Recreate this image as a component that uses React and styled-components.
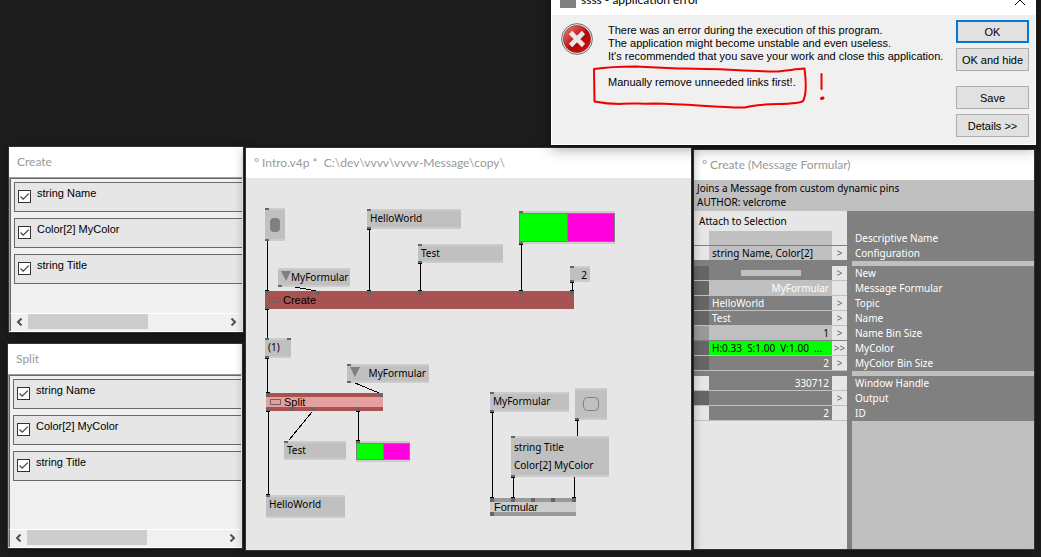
import React from "react";
import styled, { createGlobalStyle, css } from "styled-components";

const uiFont = '"Liberation Sans", Arial, sans-serif';
const titleFont = 'Lato, "Segoe UI", sans-serif';
const patchFont = '"Noto Sans", "Lucida Sans Unicode", sans-serif';

const GlobalStyle = createGlobalStyle`
  *, *::before, *::after { box-sizing: border-box; }
  body { margin: 0; background: #1d1d1d; overflow: hidden; }
  button { font: inherit; color: inherit; margin: 0; padding: 0; border: 0; background: none; }
  svg { flex: none; }
`;

/* ---------- desktop and windows ---------- */

const Desktop = styled.main`
  position: relative;
  min-height: 100vh;
  padding: 146px 6px 6px 7px;
  display: grid;
  grid-template-columns: 237px minmax(0, 447fr) minmax(0, 342fr);
  column-gap: 1px;
  background: #1d1d1d;
  font: 11px/14px ${uiFont};
  color: #000;
`;

const Side = styled.div`
  display: flex;
  flex-direction: column;
  gap: 10px;
  padding-bottom: 2px;
`;

const Window = styled.section`
  display: flex;
  flex-direction: column;
  min-width: 0;
  border: 1px solid #333;
  background: #fff;
  box-shadow: 0 2px 10px rgba(0, 0, 0, 0.4);
`;

const FormularWindow = styled(Window)`
  width: 236px;
  align-self: ${(p) => (p.$end ? "flex-end" : "flex-start")};
  flex: ${(p) => (p.$grow ? "1" : "0 0 187px")};
`;

const PatchWindow = styled(Window)`
  position: relative;
  z-index: 1;
  margin-top: 1px;
`;

const InspectorWindow = styled(Window)`
  margin: 3px 0 1px;
`;

const TitleBar = styled.h2`
  flex: none;
  height: 30px;
  margin: 0;
  padding: 0 8px;
  overflow: hidden;
  background: #fff;
  color: #999;
  font: 12px/30px ${titleFont};
  white-space: pre;
`;

/* ---------- formular lists ---------- */

const Sunken = styled.div`
  flex: 1;
  display: flex;
  flex-direction: column;
  border: 1px solid #a0a0a0;
  border-right-color: #fff;
  border-bottom-color: #fff;
  background: #f0f0f0;
`;

const List = styled.ul`
  flex: 1;
  display: flex;
  flex-direction: column;
  gap: 6px;
  margin: 0;
  padding: 3px 0 0 3px;
  list-style: none;
  border-top: 1px solid #696969;
  border-left: 1px solid #696969;
`;

const Item = styled.li`
  height: 30px;
  border: 1px solid #696969;
  border-right: 0;
  background: #e6e6e6;
`;

const ItemLabel = styled.label`
  display: flex;
  gap: 6px;
  padding: 3px 0 0 3px;
`;

const TickBox = styled.span`
  display: grid;
  margin-top: 4px;

  > * { grid-area: 1 / 1; }
  svg { pointer-events: none; }
`;

const Tick = styled.input`
  appearance: none;
  width: 13px;
  height: 13px;
  margin: 0;
  border: 1px solid #333;
  background: #fff;

  &:not(:checked) + svg { visibility: hidden; }
`;

const ScrollBar = styled.div`
  display: flex;
  height: 18px;
  padding-bottom: 2px;
  border-top: 1px solid #fff;
  border-left: 1px solid #696969;
  background: #f0f0f0;
`;

const ScrollButton = styled.button`
  display: grid;
  place-items: center;
  width: 17px;
`;

const Track = styled.div`
  flex: 1;
  display: flex;
`;

const Thumb = styled.div`
  width: 120px;
  background: #cdcdcd;
`;

const Chevron = ({ d }) => (
  <svg width="7" height="8" viewBox="0 0 7 8" fill="none" stroke="#505050" strokeWidth="2">
    <path d={d} />
  </svg>
);

const fields = ["string Name", "Color[2] MyColor", "string Title"];

function Formular({ title, ...rest }) {
  return (
    <FormularWindow {...rest}>
      <TitleBar>{title}</TitleBar>
      <Sunken>
        <List>
          {fields.map((name) => (
            <Item key={name}>
              <ItemLabel>
                <TickBox>
                  <Tick type="checkbox" defaultChecked />
                  <svg width="13" height="13" fill="none" stroke="#444" strokeWidth="1.3">
                    <path d="M2.5 6.5L5.2 9.2L10.8 3.6" />
                  </svg>
                </TickBox>
                <span>{name}</span>
              </ItemLabel>
            </Item>
          ))}
        </List>
        <ScrollBar>
          <ScrollButton aria-label="Scroll left"><Chevron d="M5.5 0.5L2 4L5.5 7.5" /></ScrollButton>
          <Track><Thumb /></Track>
          <ScrollButton aria-label="Scroll right"><Chevron d="M1.5 0.5L5 4L1.5 7.5" /></ScrollButton>
        </ScrollBar>
      </Sunken>
    </FormularWindow>
  );
}

/* ---------- patch canvas ---------- */

const Canvas = styled.div`
  position: relative;
  flex: 1;
  overflow: hidden;
  background: #e6e6e6;
  font: 10px/14px ${patchFont};
`;

const Wires = styled.svg`
  position: absolute;
  inset: 0;
  width: 100%;
  height: 100%;
  fill: none;
  stroke: #000;
  shape-rendering: crispEdges;
`;

const placed = css`
  position: absolute;
  left: ${(p) => p.$x}px;
  top: ${(p) => p.$y}px;
  width: ${(p) => p.$w}px;
  height: ${(p) => p.$h}px;
`;

const IOBox = styled.div`
  ${placed}
  display: flex;
  align-items: ${(p) => (p.$center ? "center" : "flex-start")};
  justify-content: ${(p) => (p.$center ? "center" : p.$end ? "flex-end" : "space-between")};
  padding: 0 3px;
  border: solid #ccc;
  border-width: 2px 0;
  background: #c0c0c0;
  white-space: pre-line;
  line-height: ${(p) => (p.$lines ? 18 : 14)}px;
`;

const tones = {
  selected: ["#a85252", "#a85252"],
  tinted: ["#a85252", "#e4a0a0"],
  plain: ["#999", "#ccc"],
};

const Module = styled.div`
  ${placed}
  display: flex;
  align-items: center;
  gap: 3px;
  padding: 0 4px;
  border: solid ${(p) => tones[p.$tone][0]};
  border-width: 4px 0;
  background: ${(p) => tones[p.$tone][1]};
  font: 11px/10px ${uiFont};
`;

const ColorBox = styled.div`
  ${placed}
  display: flex;
  border: solid #ccc;
  border-width: 2px 0;
`;

const Swatch = styled.span`
  flex: 1;
  border: 1px solid #808080;
  border-left-width: ${(p) => (p.$first ? 1 : 0)}px;
  background: ${(p) => p.$color};
`;

const Pin = styled.i`
  position: absolute;
  left: ${(p) => p.$x}px;
  ${(p) => (p.$out ? "bottom" : "top")}: ${(p) => (p.$tall ? -4 : -2)}px;
  width: 4px;
  height: ${(p) => (p.$tall ? 4 : 2)}px;
  background: #666;
`;

const Pins = ({ ins = [], outs = [], tall }) => (
  <>
    {ins.map((x) => <Pin key={`i${x}`} $x={x} $tall={tall} />)}
    {outs.map((x) => <Pin key={`o${x}`} $x={x} $tall={tall} $out />)}
  </>
);

const Triangle = () => (
  <svg width="10" height="11" fill="#808080"><path d="M0 1H10L5 11Z" /></svg>
);

const ModuleIcon = () => (
  <svg width="11" height="6" fill="none" stroke="#666"><path d="M.5 .5H10.5V5.5H.5Z" /></svg>
);

const wires = [
  "M21.5 62V114", "M44 108L70 113", "M123.5 51V114", "M174.5 85V114", "M275.5 66V114",
  "M326.5 104V114", "M21.5 131V161", "M21.5 180V216", "M109 205L133 215", "M22.5 233V318",
  "M66 234L43 262", "M112.5 233V264", "M246.5 234V321", "M331.5 242V260", "M328.5 298V321",
  "M267.5 299V321",
];
const wireEnds = [
  [19, 62], [121, 51], [172, 85], [273, 66], [324, 104], [19, 131], [19, 180], [20, 233],
  [110, 233], [244, 234], [329, 242], [265, 299], [19, 112], [121, 112], [172, 112], [273, 112],
  [324, 112], [19, 160], [20, 214], [20, 316], [110, 262], [244, 319], [265, 319], [326, 319],
];

function Patch() {
  return (
    <PatchWindow>
      <TitleBar>{"° Intro.v4p *  C:\\dev\\vvvv\\vvvv-Message\\copy\\"}</TitleBar>
      <Canvas>
        <Wires>
          {wires.map((d) => <path key={d} d={d} />)}
          {wireEnds.map(([x, y]) => <path key={`${x},${y}`} d={`M${x} ${y + 0.5}h4`} />)}
        </Wires>

        <IOBox $x={19} $y={30} $w={20} $h={33} $center>
          <Pins ins={[0]} outs={[0]} />
          <svg width="10" height="14"><rect width="10" height="14" rx="4" fill="#808080" /></svg>
        </IOBox>
        <IOBox $x={121} $y={31} $w={94} $h={20}><Pins ins={[0]} outs={[0]} />HelloWorld</IOBox>
        <IOBox $x={172} $y={66} $w={85} $h={19}><Pins ins={[0]} outs={[0]} />Test</IOBox>
        <IOBox $x={32} $y={90} $w={72} $h={19}>
          <Pins outs={[0]} /><Triangle />MyFormular
        </IOBox>
        <ColorBox $x={273} $y={33} $w={96} $h={33}>
          <Pins ins={[0]} outs={[0]} />
          <Swatch $first $color="#00ff00" /><Swatch $color="#ff00dc" />
        </ColorBox>
        <IOBox $x={324} $y={88} $w={20} $h={16} $end><Pins ins={[0]} outs={[0]} />2</IOBox>

        <Module $x={19} $y={113} $w={309} $h={18} $tone="selected">
          <Pins tall ins={[0, 51, 102, 153, 254, 305]} outs={[0]} />
          <ModuleIcon />Create
        </Module>

        <IOBox $x={19} $y={160} $w={26} $h={20}><Pins ins={[0, 22]} outs={[0]} />(1)</IOBox>
        <IOBox $x={101} $y={186} $w={82} $h={19}>
          <Pins ins={[0]} outs={[0]} /><Triangle />MyFormular
        </IOBox>

        <Module $x={20} $y={215} $w={117} $h={18} $tone="tinted">
          <Pins tall ins={[0, 113]} outs={[0, 23, 45, 90]} />
          <ModuleIcon />Split
        </Module>

        <IOBox $x={38} $y={263} $w={62} $h={19}><Pins ins={[0]} />Test</IOBox>
        <ColorBox $x={110} $y={263} $w={54} $h={21}>
          <Pins ins={[0]} />
          <Swatch $first $color="#00ff00" /><Swatch $color="#ff00dc" />
        </ColorBox>
        <IOBox $x={20} $y={317} $w={79} $h={23}><Pins ins={[0]} />HelloWorld</IOBox>

        <IOBox $x={244} $y={214} $w={79} $h={20}><Pins ins={[0]} outs={[0]} />MyFormular</IOBox>
        <IOBox $x={329} $y={210} $w={32} $h={32} $center>
          <Pins outs={[0]} />
          <svg width="16" height="14" fill="none" stroke="#808080">
            <rect x=".5" y=".5" width="15" height="13" rx="4" />
          </svg>
        </IOBox>
        <IOBox $x={265} $y={258} $w={98} $h={41} $lines>
          <Pins ins={[0]} outs={[0]} />{"string Title\nColor[2] MyColor"}
        </IOBox>
        <Module $x={244} $y={320} $w={86} $h={18} $tone="plain">
          <Pins tall ins={[0, 21, 41, 61, 82]} outs={[0]} />Formular
        </Module>
      </Canvas>
    </PatchWindow>
  );
}

/* ---------- inspector ---------- */

const Summary = styled.p`
  flex: none;
  height: 31px;
  margin: 0;
  padding: 1px 3px;
  background: #c0c0c0;
  white-space: pre-line;
`;

const InspectorBody = styled.div`
  flex: 1;
  display: flex;
  flex-direction: column;
  font: 10px/14px ${patchFont};
`;

const PinTable = styled.table`
  flex: none;
  width: 100%;
  table-layout: fixed;
  border-collapse: separate;
  border-spacing: 0;

  td, th { padding: 0; height: 15px; font-weight: normal; text-align: left; white-space: nowrap; }
`;

const Line = styled.tr`
  td { border-bottom: 1px solid ${(p) => (p.$dark ? "#808080" : "#c0c0c0")}; }
`;

const Caption = styled.td`
  && { height: 20px; padding: 0 5px; background: #e6e6e6; border: 0; }
`;

const PinCell = styled.td`
  background: ${(p) => p.$bg};
`;

const ValueCell = styled.td`
  && {
    padding: 0 3px;
    text-align: ${(p) => (p.$right ? "right" : "left")};
    white-space: pre;
  }
  overflow: hidden;
  background: ${(p) => p.$bg};
  color: ${(p) => p.$ink};
`;

const MoreCell = styled.td`
  && { text-align: center; }
  background: #e6e6e6;
  color: #666;
`;

const NameCell = styled.th`
  && { padding: 0 0 1px 8px; }
  background: #808080;
  color: #fff;
`;

const Gap = styled.td`
  && { height: 5px; }
  background: ${(p) => p.$bg};
  border-left: ${(p) => (p.$rail ? "5px solid #808080" : "0")};
`;

const BangButton = styled.button`
  display: block;
  width: 60px;
  height: 6px;
  margin: 0 auto;
  background: #c0c0c0;
`;

const Rest = styled.div`
  flex: 1;
  display: flex;
  background: #e6e6e6;

  &::after {
    content: "";
    flex: 1;
    margin-left: 153px;
    border-left: 5px solid #808080;
    background: #c0c0c0;
  }
`;

const Columns = styled.colgroup`
  col:nth-child(odd) { width: 15px; }
  col:nth-child(2) { width: 123px; }
`;

const D = "#666", L = "#e6e6e6", G = "#808080", S = "#c0c0c0";
const groups = [
  [
    { name: "Descriptive Name", value: "", pin: L, bg: S, more: "", dark: true },
    { name: "Configuration", value: "string Name, Color[2]", pin: L, bg: S, more: ">", dark: true },
  ],
  [
    { name: "New", bang: true, pin: D, bg: G, more: ">" },
    { name: "Message Formular", value: "MyFormular", pin: D, bg: S, ink: "#fff", right: true, more: "" },
    { name: "Topic", value: "HelloWorld", pin: D, bg: G, ink: "#fff", more: ">" },
    { name: "Name", value: "Test", pin: D, bg: G, ink: "#fff", more: ">" },
    { name: "Name Bin Size", value: "1", pin: "#999", bg: S, right: true, more: ">", dark: true },
    { name: "MyColor", value: "H:0.33  S:1.00  V:1.00  ...", pin: D, bg: "#00ff00", more: ">>" },
    { name: "MyColor Bin Size", value: "2", pin: D, bg: G, ink: "#fff", right: true, more: ">" },
  ],
  [
    { name: "Window Handle", value: "330712", pin: L, bg: G, ink: "#fff", right: true, more: "" },
    { name: "Output", value: "", pin: D, bg: G, more: ">" },
    { name: "ID", value: "2", pin: L, bg: G, ink: "#fff", right: true, more: "" },
  ],
];

function Inspector() {
  return (
    <InspectorWindow>
      <TitleBar>° Create (Message Formular)</TitleBar>
      <InspectorBody>
        <Summary>{"Joins a Message from custom dynamic pins\nAUTHOR: velcrome"}</Summary>
        <PinTable>
          <Columns><col /><col /><col /></Columns>
          <tbody>
            <tr><Caption colSpan={3}>Attach to Selection</Caption><NameCell /></tr>
            {groups.map((rows, g) => (
              <React.Fragment key={g}>
                {g > 0 && <tr><Gap colSpan={3} $bg={G} /><Gap $bg={S} $rail /></tr>}
                {rows.map((r) => (
                  <Line key={r.name} $dark={r.dark}>
                    <PinCell $bg={r.pin} />
                    <ValueCell $bg={r.bg} $ink={r.ink} $right={r.right}>
                      {r.bang ? <BangButton aria-label="New" /> : r.value}
                    </ValueCell>
                    <MoreCell>{r.more}</MoreCell>
                    <NameCell scope="row">{r.name}</NameCell>
                  </Line>
                ))}
              </React.Fragment>
            ))}
          </tbody>
        </PinTable>
        <Rest />
      </InspectorBody>
    </InspectorWindow>
  );
}

/* ---------- error dialog ---------- */

const Dialog = styled.section`
  position: absolute;
  z-index: 2;
  top: -16px;
  right: 5px;
  width: 485px;
  border: 1px solid #fff;
  background: #f0f0f0;
  box-shadow: 0 3px 14px rgba(0, 0, 0, 0.4);
`;

const DialogTitle = styled.header`
  display: flex;
  align-items: center;
  gap: 5px;
  height: 30px;
  padding: 0 10px 0 8px;
  background: #fff;
  font: 12px/30px ${titleFont};
`;

const AppIcon = styled.span`
  width: 16px;
  height: 16px;
  background: #808080;
`;

const CloseButton = styled.button`
  display: grid;
  margin-left: auto;
`;

const DialogBody = styled.div`
  display: flex;
  gap: 15px;
  padding: 5px 6px 7px 9px;
`;

const Message = styled.div`
  flex: 1;
  min-width: 0;
  padding-top: 4px;
  line-height: 13px;
  white-space: nowrap;

  p { margin: 0 0 13px; }
`;

const Buttons = styled.div`
  display: flex;
  flex-direction: column;
  gap: 5px;
`;

const DialogButton = styled.button`
  && {
    width: 73px;
    height: 23px;
    margin-top: ${(p) => (p.$apart ? 10 : 0)}px;
    border: ${(p) => (p.$primary ? "2px solid #0078d7" : "1px solid #adadad")};
    background: #e1e1e1;
    white-space: nowrap;
  }
`;

const ErrorIcon = styled.svg`
  margin-top: 3px;
`;

const Marker = styled.svg`
  position: absolute;
  left: 39px;
  top: 76px;
  fill: none;
  stroke: #f00000;
  stroke-width: 2;
  stroke-linejoin: round;
  stroke-linecap: round;
  pointer-events: none;
`;

function ErrorDialog() {
  return (
    <Dialog role="dialog" aria-label="application error">
      <DialogTitle>
        <AppIcon />
        <span>ssss - application error</span>
        <CloseButton aria-label="Close">
          <svg width="10" height="10" stroke="#000" fill="none"><path d="M0 0L10 10M10 0L0 10" /></svg>
        </CloseButton>
      </DialogTitle>
      <DialogBody>
        <ErrorIcon width="32" height="32" viewBox="0 0 32 32">
          <defs>
            <linearGradient id="errorRed" x1="0" y1="0" x2="1" y2="1">
              <stop offset="0" stopColor="#e08a8a" />
              <stop offset="0.45" stopColor="#c81e1e" />
              <stop offset="0.55" stopColor="#b00808" />
              <stop offset="1" stopColor="#d81414" />
            </linearGradient>
          </defs>
          <circle cx="16" cy="16" r="15.4" fill="#e8e8e8" stroke="#707070" />
          <circle cx="16" cy="16" r="13.6" fill="url(#errorRed)" stroke="#8c2020" strokeWidth="0.6" />
          <path d="M9.500 9.500L22.500 22.500M22.500 9.500L9.500 22.500" stroke="#e8e8e8" strokeWidth="4.6" />
        </ErrorIcon>
        <Message>
          <p>
            There was an error during the execution of this program.<br />
            The application might become unstable and even useless.<br />
            It's recommended that you save your work and close this application.
          </p>
          <p>Manually remove unneeded links first!.</p>
        </Message>
        <Buttons>
          <DialogButton $primary>OK</DialogButton>
          <DialogButton>OK and hide</DialogButton>
          <DialogButton $apart>Save</DialogButton>
          <DialogButton>Details &gt;&gt;</DialogButton>
        </Buttons>
      </DialogBody>
      <Marker width="245" height="55" viewBox="591 61 245 55">
        <path d="M594 69C608 67 622 66.500 635 66.500L678 68.500C712 68 742 71 775 71.500C786 71 795 69 804.500 68.500C806 80 807 94 803 101C798 106 760 102 745 107.500C720 108 690 104 655 103.500C640 104 630 103 620 104C610 104 602 103 594.500 101.500Z" />
        <path d="M821.500 74V89" />
        <path d="M821.500 98.500L823 98" strokeWidth="3" />
      </Marker>
    </Dialog>
  );
}

export default function App() {
  return (
    <>
      <GlobalStyle />
      <Desktop>
        <Side>
          <Formular title="Create" $end />
          <Formular title="Split" $grow />
        </Side>
        <Patch />
        <Inspector />
        <ErrorDialog />
      </Desktop>
    </>
  );
}
